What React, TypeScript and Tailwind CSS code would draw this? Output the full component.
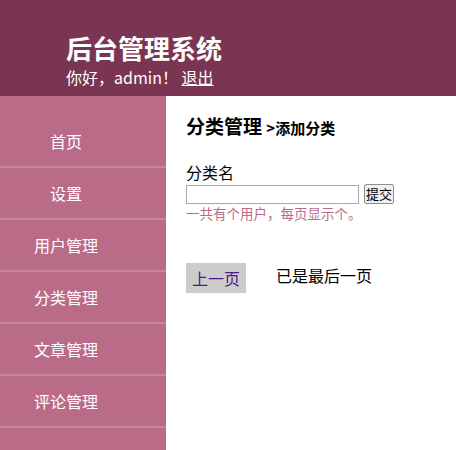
import React from "react";

const menu = ["首页", "设置", "用户管理", "分类管理", "文章管理", "评论管理"];

export default function App() {
  return (
    <div className="min-h-[450px] flex flex-col font-['Noto_Sans_CJK_SC','Liberation_Sans',sans-serif] text-black">
      {/* header */}
      <header className="h-[96px] bg-[#7a3552] pl-[66px] pt-[30px] text-white">
        <h1 className="text-[26px] font-bold leading-[36px]">后台管理系统</h1>
        <p className="text-[16px] leading-[22px]">
          你好，admin！ <a className="underline">退出</a>
        </p>
      </header>

      <div className="flex flex-1">
        {/* sidebar */}
        <aside className="w-[166px] bg-[#b96b87] pt-[20px] min-h-[354px]">
          <ul>
            {menu.map((m) => (
              <li key={m} className="border-b-2 border-[#c4859c]">
                <a className="block w-[132px] h-[50px] leading-[50px] text-center text-[16px] text-white">
                  {m}
                </a>
              </li>
            ))}
          </ul>
        </aside>

        {/* content */}
        <main className="flex-1 pl-[20px] pt-[17px]">
          <h3 className="text-[19px] font-bold leading-[26px]">
            分类管理 <span className="text-[15px] font-bold">&gt;添加分类</span>
          </h3>
          <form className="mt-[19px]">
            <label className="block text-[16px] leading-[24px]">分类名</label>
            <div className="flex items-center gap-[5px]">
              <input className="w-[173px] h-[19px] border border-[#a9a9a9] bg-white" />
              <button
                type="button"
                className="h-[20px] px-[1px] text-[13px] leading-[16px] border border-[#8f8f8f] bg-[#efefef] rounded-[2px]"
              >
                提交
              </button>
            </div>
            <p className="text-[13.5px] leading-[18px] text-[#b96b87]">一共有个用户，每页显示个。</p>
          </form>
          <div className="mt-[41px] flex items-center">
            <a className="w-[60px] h-[30px] leading-[30px] text-center bg-[#cccccc] text-[#4b1a8b] text-[16px]">上一页</a>
            <span className="ml-[30px] text-[16px] -mt-[6px]">已是最后一页</span>
          </div>
        </main>
      </div>
    </div>
  );
}
